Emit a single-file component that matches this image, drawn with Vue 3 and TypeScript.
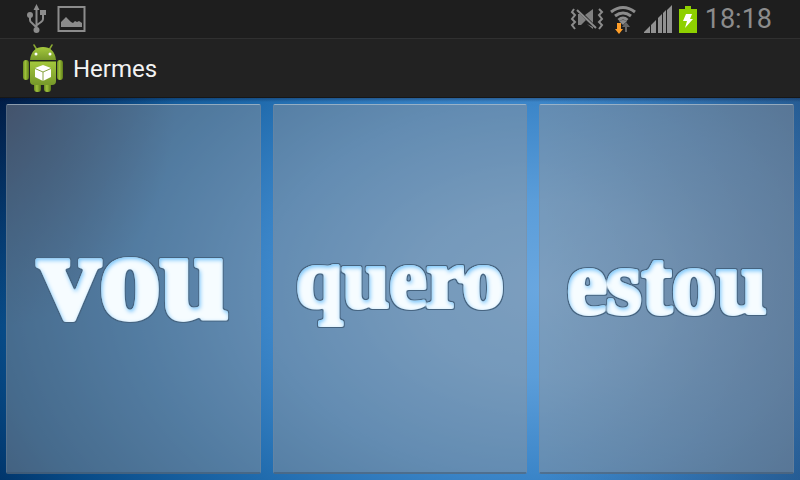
<script setup lang="ts">
interface Choice {
  word: string
  size: string
}

const choices: Choice[] = [
  { word: 'vou', size: 'large' },
  { word: 'quero', size: 'small' },
  { word: 'estou', size: 'medium' },
]
</script>

<template>
  <div class="screen">
    <header class="status">
      <div class="group left">
        <svg width="20" height="30" viewBox="0 0 20 30" aria-label="USB">
          <g fill="none" stroke="#8c8c8c" stroke-width="2">
            <path d="M10.500 5v21M4 12v4q0 2 2 3l4 4M17 11v4q0 2-2 3l-4 3" />
          </g>
          <path d="M10.500 0l3 6h-6zM14 6h6v5h-6z" fill="#8c8c8c" />
          <circle cx="4" cy="11" r="3" fill="#8c8c8c" />
          <circle cx="10.500" cy="26" r="3" fill="#8c8c8c" />
        </svg>
        <svg width="30" height="28" viewBox="0 0 30 28" aria-label="Picture">
          <path d="M1.500 2h26v24h-26z" fill="none" stroke="#8c8c8c" stroke-width="2" />
          <path d="M4 22v-5l5-5 5 5 2 1 2-2 2 1 2-1 3 2v4z" fill="#8c8c8c" />
        </svg>
      </div>
      <div class="group right">
        <svg width="34" height="24" viewBox="0 0 34 24" aria-label="Vibrate">
          <g fill="none" stroke="#8c8c8c" stroke-width="2">
            <path d="M4 2L2 5l3 3-3 4 3 3-3 3 3 4M29 2l3 3-3 3 3 4-3 3 3 3-3 4" />
            <path d="M7 3l19 18" />
          </g>
          <path d="M8 7h2l6 6-5 5H8zM15 8l8-6v14zM17 17l6 5v-2z" fill="#808080" />
        </svg>
        <svg width="28" height="30" viewBox="0 0 28 30" aria-label="Wi-Fi">
          <g fill="none" stroke="#8c8c8c" stroke-width="3">
            <path d="M1 8q12-9 24 0M5 12q8-6 16 0M8.500 16q4.500-4 9 0" />
          </g>
          <path d="M9 17q4-2 8 0l-4 4z" fill="#8c8c8c" />
          <path d="M7 19h4v6h2l-4 5-4-5h2z" fill="#ff9e28" />
          <path d="M15 28v-5h-3l4-5 4 5h-3v5z" fill="#666" />
        </svg>
        <svg width="29" height="28" viewBox="0 0 29 28" aria-label="Signal">
          <path d="M0 28v-1l6-6v7zM7 28v-8l5-5v13zM14 28V13l4-4v19zM19 28V8l3-3v23zM23 28V5l5-5v28z" fill="#919191" />
        </svg>
        <svg width="18" height="28" viewBox="0 0 18 28" aria-label="Charging">
          <path d="M0 4h6V1h6v3h6v24H0z" fill="#8ed000" />
          <path d="M7 9h6l-2 5h3L6 23l2-7H4z" fill="#fff" />
        </svg>
        <time class="clock">18:18</time>
      </div>
    </header>

    <div class="bar">
      <svg width="42" height="48" viewBox="0 0 42 48" aria-hidden="true">
        <defs>
          <linearGradient id="robot" x1="0" x2="0" y1="0" y2="1">
            <stop offset="0" stop-color="#a5c93d" />
            <stop offset="1" stop-color="#77992a" />
          </linearGradient>
          <linearGradient id="limb">
            <stop offset="0" stop-color="#6b8c22" />
            <stop offset="0.400" stop-color="#9fc23b" />
            <stop offset="1" stop-color="#5b7a18" />
          </linearGradient>
        </defs>
        <path d="M12 1l3 5M30 1l-3 5" stroke="#8aa832" stroke-width="1.500" stroke-linecap="round" />
        <path d="M8 16C9 7 14 3 21 3s12 4 13 13z" fill="url(#robot)" />
        <circle cx="14" cy="10" r="1.500" fill="#fff" />
        <circle cx="28" cy="10" r="1.500" fill="#fff" />
        <rect x="1" y="16" width="6" height="20" rx="3" fill="url(#limb)" />
        <rect x="35" y="16" width="6" height="20" rx="3" fill="url(#limb)" />
        <rect x="12" y="34" width="7" height="14" rx="3" fill="url(#limb)" />
        <rect x="22" y="34" width="7" height="14" rx="3" fill="url(#limb)" />
        <path d="M8 17h26v20q0 4-4 4H12q-4 0-4-4z" fill="url(#robot)" />
        <path d="M8 17.500h26" stroke="#647f25" />
        <path d="M21 21l8 3v9l-8 4-8-4v-9z" fill="#fff" />
        <path d="M13 24.500l8 3.500 8-3.500M21 28v9" fill="none" stroke="#87a33f" />
      </svg>
      <h1>Hermes</h1>
    </div>

    <main class="choices">
      <button v-for="choice in choices" :key="choice.word" type="button" class="choice">
        <span class="word" :class="choice.size">{{ choice.word }}</span>
      </button>
    </main>

    <svg class="defs" width="0" height="0" aria-hidden="true">
      <filter id="ice" x="-10%" y="-10%" width="120%" height="120%" color-interpolation-filters="sRGB">
        <feGaussianBlur in="SourceAlpha" stdDeviation="1.100" />
        <feComponentTransfer result="shape">
          <feFuncA type="linear" slope="3" intercept="-1" />
        </feComponentTransfer>
        <feMorphology in="shape" operator="dilate" radius="1" result="wide" />
        <feFlood flood-color="#45637f" />
        <feComposite in2="wide" operator="in" result="outline" />
        <feFlood flood-color="#f6fcff" />
        <feComposite in2="shape" operator="in" result="face" />
        <feGaussianBlur in="shape" stdDeviation="2" />
        <feOffset dx="1" dy="2" result="inner" />
        <feFlood flood-color="#78c4fa" />
        <feComposite in2="shape" operator="in" />
        <feComposite in2="inner" operator="out" result="edge" />
        <feMerge>
          <feMergeNode in="outline" />
          <feMergeNode in="face" />
          <feMergeNode in="edge" />
        </feMerge>
      </filter>
    </svg>
  </div>
</template>

<style>
body {
  margin: 0;
  background: #1e1e1e;
}
</style>

<style scoped>
.screen {
  display: flex;
  flex-direction: column;
  min-height: 100vh;
  font-family: Roboto, sans-serif;
}

.status {
  display: flex;
  justify-content: space-between;
  align-items: center;
  height: 38px;
  padding: 0 28px 0 26px;
  background: #1e1e1e;
}

.group {
  display: flex;
  align-items: center;
}

.left {
  gap: 11px;
}

.right {
  gap: 6px;
}

.clock {
  margin-left: 2px;
  color: #8c8c8c;
  font-size: 27px;
  line-height: 38px;
}

.bar {
  display: flex;
  align-items: center;
  gap: 9px;
  height: 58px;
  padding: 0 22px;
  border-top: 1px solid #303030;
  border-bottom: 1px solid #171717;
  background: #222;
}

h1 {
  margin: 0;
  padding-top: 2px;
  color: #f3f3f3;
  font-size: 24px;
  font-weight: 400;
}

.choices {
  flex: 1;
  display: grid;
  grid-template-columns: repeat(3, 1fr);
  gap: 12px;
  padding: 6px;
  background:
    linear-gradient(rgb(0 10 40 / 30%), transparent 4px),
    radial-gradient(ellipse 22% 60% at 0 0, rgb(0 8 40 / 55%), transparent),
    linear-gradient(90deg, transparent 68%, rgb(40 65 105 / 40%)),
    radial-gradient(ellipse 75% 105% at 68% 50%, #69a7e0 0%, #5b9dd9 22%, #3c86c9 46%, #1e69ab 68%, #074a86 91%, #003368 104%);
}

.choice {
  display: flex;
  align-items: center;
  justify-content: center;
  min-width: 0;
  padding: 0;
  border: 1px solid rgb(120 140 160 / 35%);
  border-top-color: rgb(190 205 215 / 60%);
  border-bottom: 2px solid rgb(60 85 110 / 50%);
  border-radius: 2px;
  background: rgb(148 148 150 / 45%);
}

.word {
  color: #fff;
  font-family: 'Liberation Serif', serif;
  font-weight: 700;
  line-height: 1;
  -webkit-text-stroke: 4px #fff;
  filter: url(#ice);
}

.large {
  padding-bottom: 24px;
  font-size: 122px;
  -webkit-text-stroke-width: 6px;
}

.small {
  padding-bottom: 20px;
  font-size: 84px;
}

.medium {
  padding-bottom: 12px;
  font-size: 90px;
}

.defs {
  position: absolute;
}
</style>
